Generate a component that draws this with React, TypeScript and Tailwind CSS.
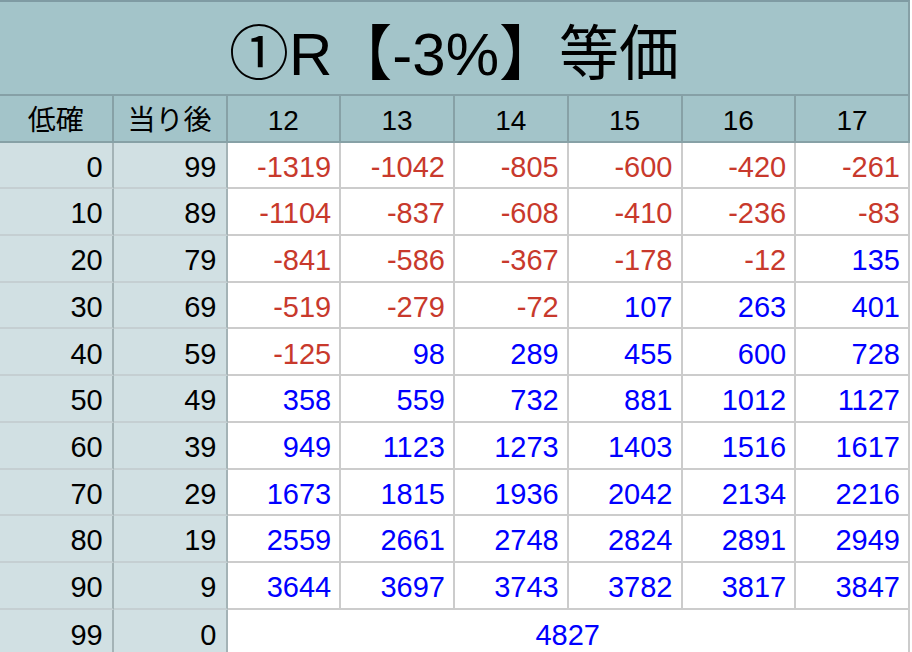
const rows: [number, number, number[]][] = [
  [0, 99, [-1319, -1042, -805, -600, -420, -261]],
  [10, 89, [-1104, -837, -608, -410, -236, -83]],
  [20, 79, [-841, -586, -367, -178, -12, 135]],
  [30, 69, [-519, -279, -72, 107, 263, 401]],
  [40, 59, [-125, 98, 289, 455, 600, 728]],
  [50, 49, [358, 559, 732, 881, 1012, 1127]],
  [60, 39, [949, 1123, 1273, 1403, 1516, 1617]],
  [70, 29, [1673, 1815, 1936, 2042, 2134, 2216]],
  [80, 19, [2559, 2661, 2748, 2824, 2891, 2949]],
  [90, 9, [3644, 3697, 3743, 3782, 3817, 3847]],
];

const heads = [12, 13, 14, 15, 16, 17];

export default function App() {
  return (
    <div className="w-[912px] h-[652px] overflow-hidden bg-white text-black font-['Liberation_Sans','Noto_Sans_CJK_JP',sans-serif]">
      {/* Title */}
      <div className="w-[910px] h-[96px] bg-[#a3c4c9] border-t-2 border-b-2 border-r-2 border-t-[#7f9ba3] border-b-[#86a0a6] border-r-[#86a0a6] flex items-center justify-center text-[60px] leading-none pt-[14px]">
        ①R【-3%】等価
      </div>

      <div className="grid grid-cols-[repeat(8,113.75px)] auto-rows-[46.7px] text-[29px]">
        {/* Header */}
        <div className="h-[47px] bg-[#a3c4c9] border-r-2 border-b-2 border-[#87a1a6] flex items-center justify-center pt-1 text-[28px]">
          低確
        </div>
        <div className="h-[47px] bg-[#a3c4c9] border-r-2 border-b-2 border-[#87a1a6] flex items-center justify-center pt-1 text-[28px]">
          当り後
        </div>
        {heads.map((h) => (
          <div
            key={h}
            className="h-[47px] bg-[#a3c4c9] border-r-2 border-b-2 border-[#87a1a6] flex items-center justify-center pt-1 text-[28px]"
          >
            {h}
          </div>
        ))}

        {rows.map(([low, after, vals]) => (
          <Row key={low} low={low} after={after} vals={vals} />
        ))}

        {/* Last row */}
        <div className="bg-[#d1e0e3] border-r-2 border-r-[#a4b3b6] flex items-center justify-end pr-[9px] pt-[5px]">
          99
        </div>
        <div className="bg-[#d1e0e3] border-r-2 border-r-[#a4b3b6] flex items-center justify-end pr-[9px] pt-[5px]">
          0
        </div>
        <div className="col-span-6 border-r-2 border-r-[#cccccc] flex items-center justify-center text-[#0000ff] pt-[5px]">
          4827
        </div>
      </div>
    </div>
  );
}

function Row({ low, after, vals }: { low: number; after: number; vals: number[] }) {
  return (
    <>
      <div className="bg-[#d1e0e3] border-r-2 border-b-2 border-r-[#a4b3b6] border-b-[#c5cfd2] flex items-center justify-end pr-[9px] pt-[5px]">
        {low}
      </div>
      <div className="bg-[#d1e0e3] border-r-2 border-b-2 border-r-[#a4b3b6] border-b-[#c5cfd2] flex items-center justify-end pr-[9px] pt-[5px]">
        {after}
      </div>
      {vals.map((v, i) => (
        <div
          key={i}
          className={`border-r-2 border-b-2 border-[#cccccc] flex items-center justify-end pr-[8px] pt-[5px] ${
            v < 0 ? 'text-[#c8392c]' : 'text-[#0000ff]'
          }`}
        >
          {v}
        </div>
      ))}
    </>
  );
}
